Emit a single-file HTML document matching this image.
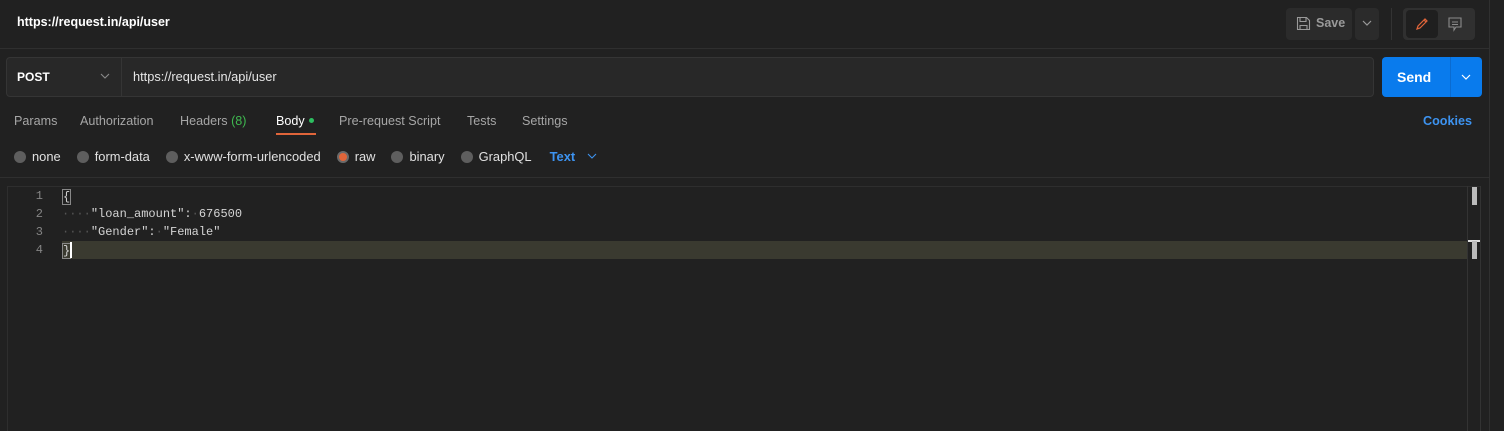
<!DOCTYPE html>
<html><head><style>
*{margin:0;padding:0;box-sizing:border-box}
body{width:1504px;height:431px;background:#212121;font-family:"Liberation Sans",sans-serif;position:relative;overflow:hidden;color:#fff}
.a{position:absolute}
.t{font-size:12.6px;color:#a6a6a6}
.rad{display:inline-block;width:12px;height:12px;border-radius:50%;background:#5e5e5e;vertical-align:-2px;margin-right:6px}
.code{font-family:"Liberation Mono",monospace;font-size:12px;color:#d4d4d4}
.ln{font-family:"Liberation Mono",monospace;font-size:12px;color:#858585;width:20px;text-align:right}
</style></head><body>
<div class="a" style="left:17px;top:15px;font-size:12.5px;font-weight:bold;color:#fff">https://request.in/api/user</div>
<div class="a" style="left:0;top:48px;width:1489px;height:1px;background:#2f2f2f"></div>
<div class="a" style="left:1489px;top:0;width:1px;height:431px;background:#303030"></div>
<!-- save -->
<div class="a" style="left:1286px;top:8px;width:66px;height:32px;background:#2b2b2b;border-radius:4px"></div>
<svg class="a" style="left:1296px;top:16px" width="15" height="15" viewBox="0 0 15 15"><path d="M1.5 1.5h9l3 3v9h-12z M4 1.5v4h6v-4 M4 13.5v-4h7v4" fill="none" stroke="#9a9a9a" stroke-width="1.1"/></svg>
<div class="a" style="left:1316px;top:16px;font-size:12.5px;font-weight:bold;color:#9a9a9a">Save</div>
<div class="a" style="left:1355px;top:8px;width:24px;height:32px;background:#2b2b2b;border-radius:4px"></div>
<svg class="a" style="left:1361px;top:19px" width="12" height="8"><path d="M2 2l4 4 4-4" fill="none" stroke="#9a9a9a" stroke-width="1.2"/></svg>
<div class="a" style="left:1391px;top:8px;width:1px;height:32px;background:#333"></div>
<div class="a" style="left:1403px;top:8px;width:72px;height:32px;background:#303030;border-radius:4px"></div>
<div class="a" style="left:1406px;top:10px;width:32px;height:28px;background:#1f1f1f;border-radius:4px"></div>
<svg class="a" style="left:1414px;top:16px" width="16" height="16"><path d="M3 13l1-3 7-7 2 2-7 7z M10 4l2 2" fill="none" stroke="#e0653a" stroke-width="1.2"/></svg>
<svg class="a" style="left:1447px;top:16px" width="16" height="16"><path d="M2 2h12v9H9l-2 3v-3H2z M5 6h6 M5 8.5h6" fill="none" stroke="#8a8a8a" stroke-width="1.1"/></svg>
<!-- url -->
<div class="a" style="left:6px;top:57px;width:1368px;height:40px;background:#282828;border:1px solid #353535;border-radius:4px"></div>
<div class="a" style="left:121px;top:58px;width:1px;height:38px;background:#353535"></div>
<div class="a" style="left:17px;top:70px;font-size:12px;font-weight:bold;color:#fff">POST</div>
<svg class="a" style="left:100px;top:73px" width="10" height="7"><path d="M1 1l4 4 4-4" fill="none" stroke="#8a8a8a" stroke-width="1.1"/></svg>
<div class="a" style="left:133px;top:69px;font-size:12.8px;color:#e6e6e6">https://request.in/api/user</div>
<div class="a" style="left:1382px;top:57px;width:100px;height:40px;background:#097bed;border-radius:4px"></div>
<div class="a" style="left:1450px;top:57px;width:1px;height:40px;background:#0a6bd0"></div>
<div class="a" style="left:1397px;top:69px;font-size:14px;font-weight:bold;color:#fff">Send</div>
<svg class="a" style="left:1461px;top:74px" width="10" height="7"><path d="M1 1l4 4 4-4" fill="none" stroke="#fff" stroke-width="1.2"/></svg>
<!-- tabs -->
<div class="a t" style="left:14px;top:114px">Params</div>
<div class="a t" style="left:80px;top:114px">Authorization</div>
<div class="a t" style="left:180px;top:114px">Headers <span style="color:#3fb950">(8)</span></div>
<div class="a" style="left:276px;top:114px;font-size:12.6px;color:#fff">Body</div>
<div class="a" style="left:309px;top:118px;width:5px;height:5px;border-radius:50%;background:#2dbe60"></div>
<div class="a" style="left:276px;top:133px;width:40px;height:2px;background:#e0653a"></div>
<div class="a t" style="left:339px;top:114px">Pre-request Script</div>
<div class="a t" style="left:467px;top:114px">Tests</div>
<div class="a t" style="left:522px;top:114px">Settings</div>
<div class="a" style="left:1423px;top:114px;font-size:12.6px;font-weight:bold;color:#3d93f0">Cookies</div>
<!-- radios -->
<div class="a" style="left:14px;top:149px;font-size:12.9px;color:#e0e0e0;white-space:nowrap">
<span class="rad"></span>none<span style="margin-left:16px" class="rad"></span>form-data<span style="margin-left:16px" class="rad"></span>x-www-form-urlencoded<span style="margin-left:16px;background:#e0653a;border:2px solid #6a6a6a" class="rad"></span>raw<span style="margin-left:16px" class="rad"></span>binary<span style="margin-left:16px" class="rad"></span>GraphQL<span style="margin-left:18px;color:#3d93f0;font-weight:bold">Text</span></div>
<svg class="a" style="left:587px;top:153px" width="10" height="7"><path d="M1 1l4 4 4-4" fill="none" stroke="#3d93f0" stroke-width="1.1"/></svg>
<div class="a" style="left:0;top:177px;width:1489px;height:1px;background:#2f2f2f"></div>
<!-- editor -->
<div class="a" style="left:7px;top:186px;width:1474px;height:245px;border:1px solid #2e2e2e;border-right:none;border-bottom:none"></div>
<div class="a" style="left:1467px;top:186px;width:1px;height:245px;background:#333"></div>
<div class="a" style="left:1480px;top:186px;width:1px;height:245px;background:#333"></div>
<div class="a" style="left:62px;top:241px;width:1405px;height:18px;background:#3a3a30"></div>
<div class="a" style="left:1472px;top:187px;width:5px;height:18px;background:#bbb"></div>
<div class="a" style="left:1468px;top:240px;width:12px;height:2px;background:#ddd"></div>
<div class="a" style="left:1472px;top:241px;width:5px;height:18px;background:#bbb"></div>
<div class="a ln" style="left:23px;top:189px">1</div>
<div class="a ln" style="left:23px;top:207px">2</div>
<div class="a ln" style="left:23px;top:225px">3</div>
<div class="a ln" style="left:23px;top:243px">4</div>
<div class="a code" style="left:62px;top:189px;border:1px solid #888;line-height:14px;height:16px">{</div>
<div class="a code" style="left:62px;top:207px;white-space:pre"><span style="color:#555">····</span>"loan_amount":<span style="color:#555">·</span>676500</div>
<div class="a code" style="left:62px;top:225px;white-space:pre"><span style="color:#555">····</span>"Gender":<span style="color:#555">·</span>"Female"</div>
<div class="a code" style="left:62px;top:243px;border:1px solid #888;line-height:14px;height:16px">}</div>
<div class="a" style="left:70px;top:242px;width:2px;height:16px;background:#fff"></div>
</body></html>
